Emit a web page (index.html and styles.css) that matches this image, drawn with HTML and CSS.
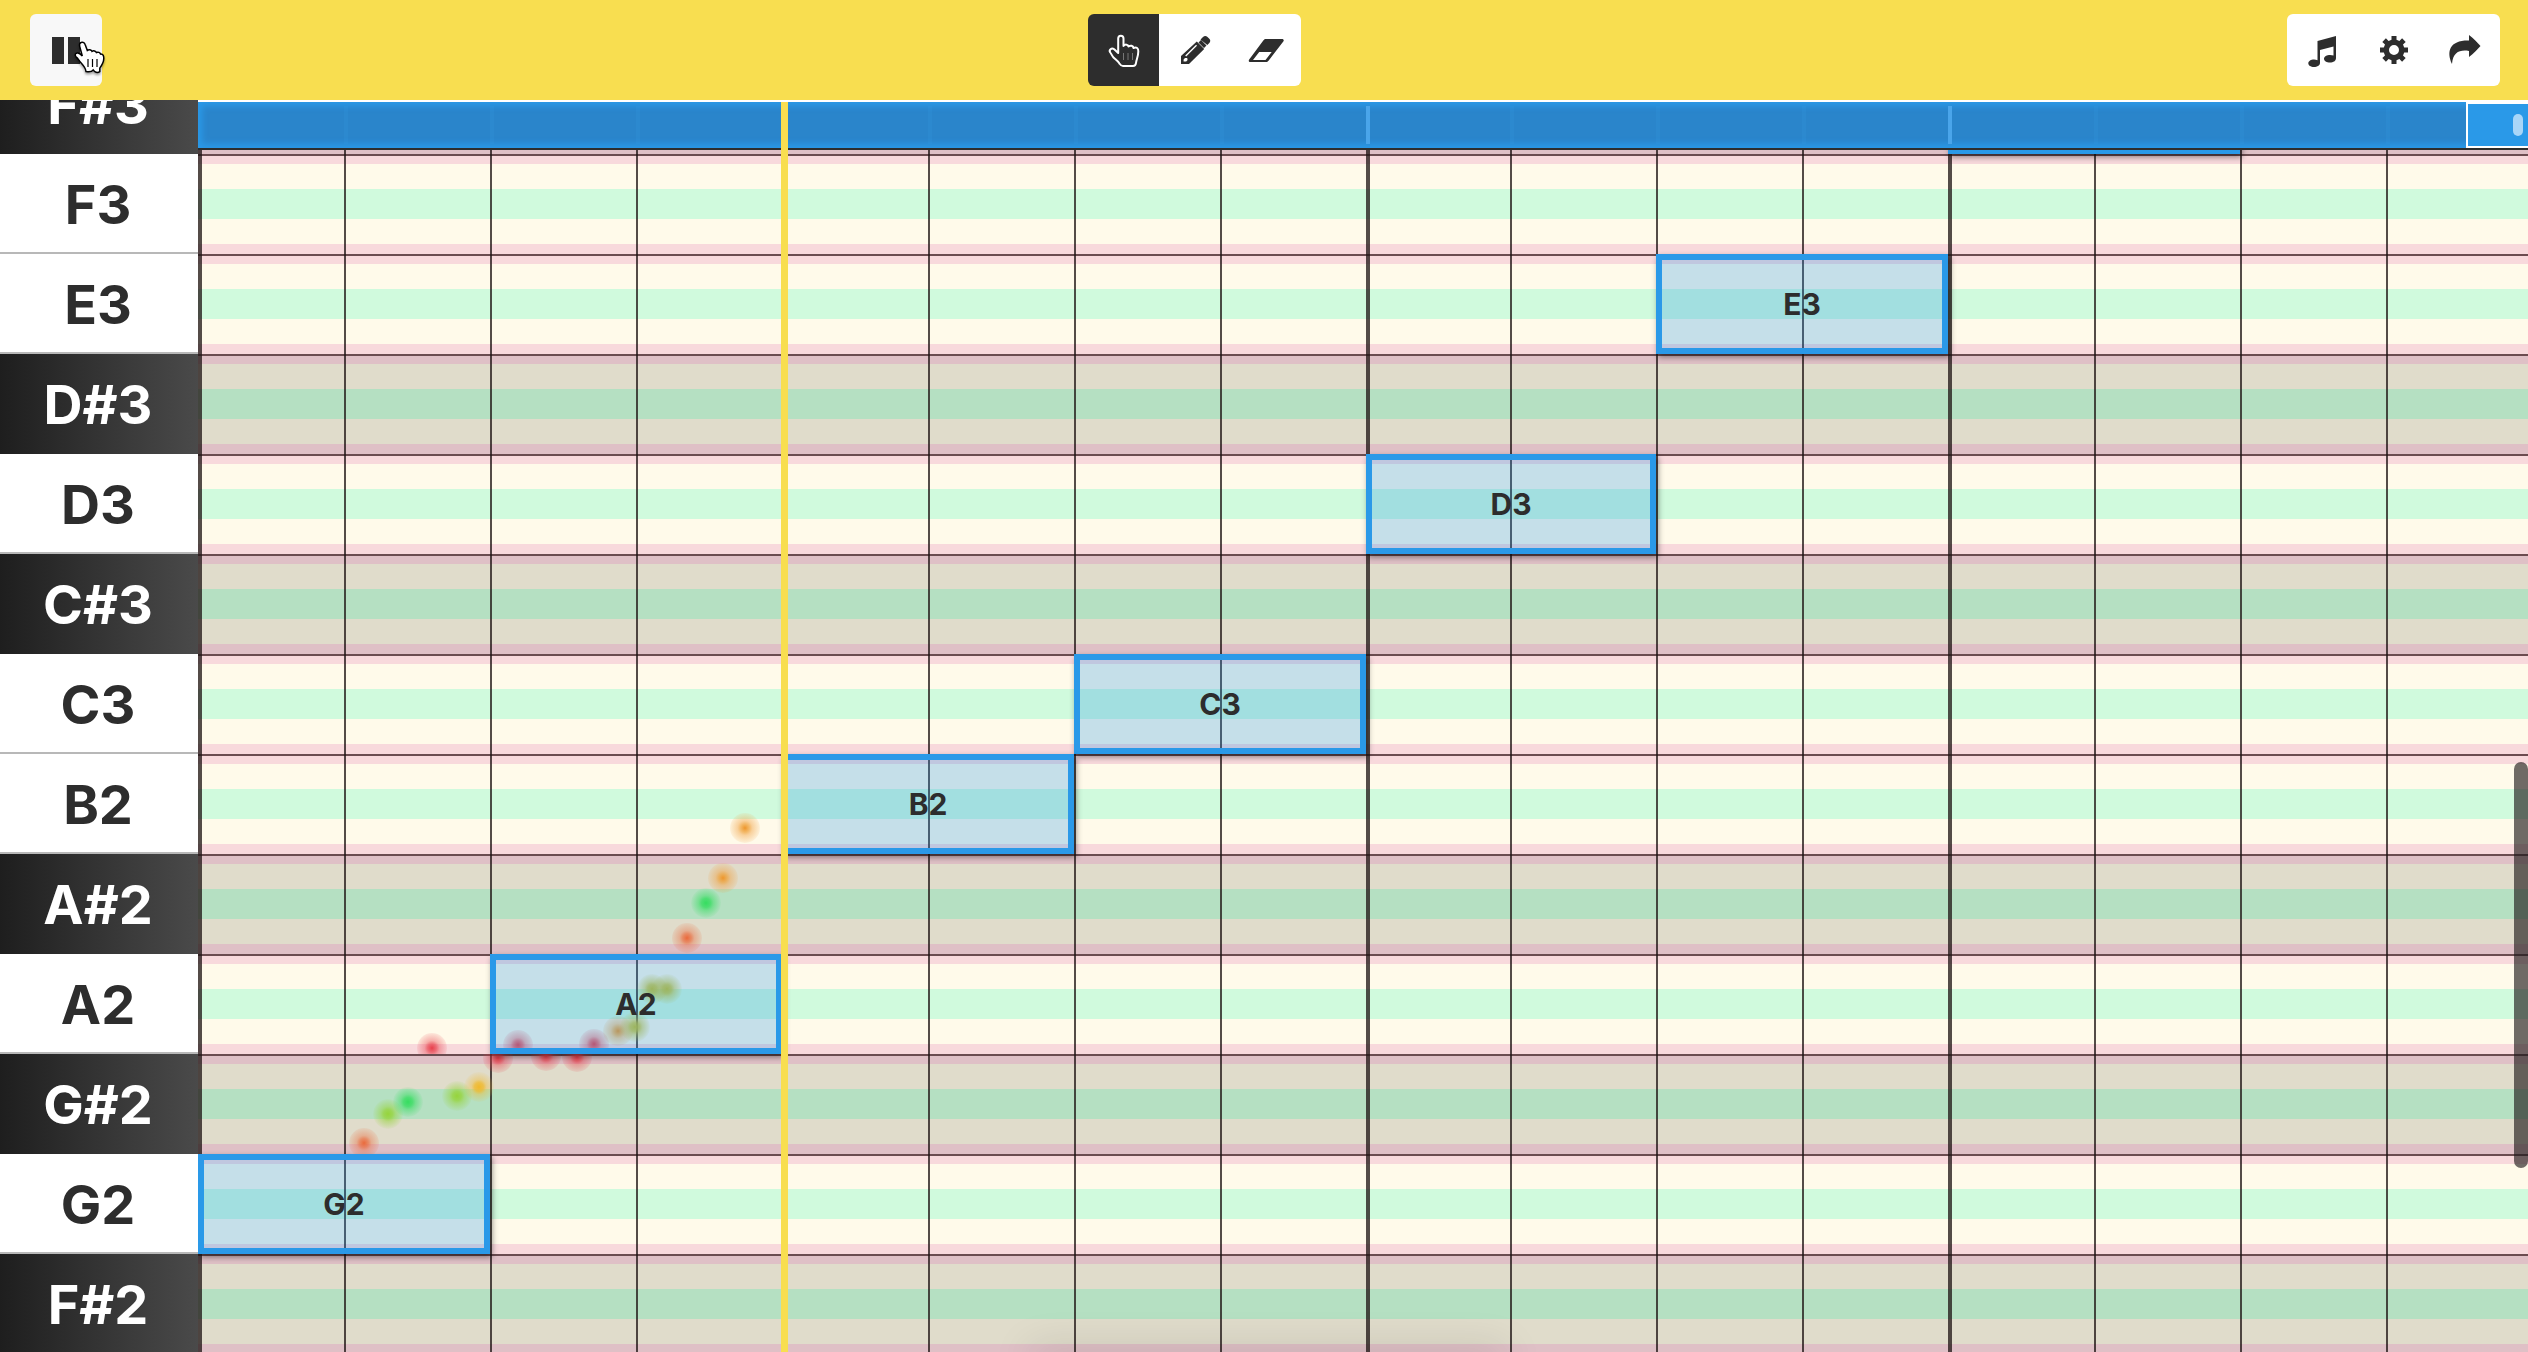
FILE: index.html
```html
<!DOCTYPE html>
<html lang="en">
<head>
<meta charset="utf-8">
<title>Piano roll</title>
<link rel="stylesheet" href="styles.css">
</head>
<body>
<header class="toolbar">
  <div class="group">
    <button class="tool tool-hover" type="button" aria-label="Pause">
      <svg class="icon" viewBox="0 0 32 32"><path d="M2 3h12v27H2zM18 3h12v27H18z"/></svg>
    </button>
    <svg class="pointer" viewBox="0 0 32 36" aria-hidden="true"><path d="M7 2.500c2.200-1 3.700.5 4.300 2.500l2 5.500c1.500-1.400 4-1 4.700.8 1.600-1 3.700-.4 4.400 1.200 1.800-.8 3.500 0 4.200 1.600 2.800-.2 3.200 2 3.200 4.500-.1 4-2 6.800-4 9.500v3.600c-1.600 1-3.200 1-5 0l-1.600-1.700c-1.600 2-4.600 2-7.200 1.500-.4-4-3-6.300-5.500-9.200-1.700-2-2.500-4-4.500-5.400C.500 15 1.200 12.500 4 13c2 .4 3.500 2 4.300 3L5.700 6.500C5.200 4.600 5.300 3.200 7 2.500z"/><path class="pointer-lines" d="M14 19v8M18.500 19v8M23 19v8"/></svg>
  </div>
  <div class="group">
    <button class="tool tool-active" type="button" aria-label="Select">
      <svg class="icon icon-line" viewBox="0 0 32 32"><path d="M10.200 19V4.500C10.200.700 15.500.700 15.500 4.500V12C17 10 20 10.200 20.500 12.500 22.500 11 25 11.500 25.500 14 28.500 12.800 30.500 14.200 30.300 17.500 30.200 23 28.500 25 28 29c-.3 2.500-1 3-3 3H15c-2 0-2.500-1-3.700-2.700C9.500 26.500 7.500 25.500 5.500 23.500 4 22 3.500 20 2.300 18.500.500 16 3.500 13.200 6.200 15.300z"/><path class="soft" d="M15.500 19v7M20 19v7M24.500 19v7"/></svg>
    </button>
    <button class="tool" type="button" aria-label="Draw">
      <svg class="icon" viewBox="0 0 32 32"><path d="M19.500 8.500 22 6l5.500 5.500L25 14zM21.500 5.500 24 3c1.500-1.500 3-1.500 4.500 0l1.800 1.800c1.300 1.400 1.300 2.800 0 4.200l-2 2zM17.800 7.500l7.400 7.400L10 30H2v-8zm-.7 3.300L6.200 21.600l1 1L18 11.800zM6 24l-1.400 1.400v2.200h2.600L8.600 26l-.4-2z"/></svg>
    </button>
    <button class="tool" type="button" aria-label="Erase">
      <svg class="icon icon-wide" viewBox="0 0 36 32"><path fill-rule="evenodd" d="M18 5h16c1.500 0 2.300 1.300 1.300 2.600L20.500 26.700c-.7.900-1.300 1.300-2.500 1.300H2.300C.8 28 .3 26.700 1.200 25.500L15.500 6.300C16.200 5.400 16.800 5 18 5zM11.200 18 5 26h12.500l6.200-8z"/></svg>
    </button>
  </div>
  <div class="group">
    <button class="tool" type="button" aria-label="Instrument">
      <svg class="icon" viewBox="0 0 32 32"><path d="M29 2v22c0 3-2.700 4.500-6 4.500s-6-1.500-6-3.800S20 21 23 21c1.300 0 2.500.2 3.500.6V12.500L13 16v13c0 2.400-2.800 4-6 4s-5.700-1.500-5.700-3.700S4 25.500 7 25.500c1.200 0 2.500.3 3.500.7V7z"/></svg>
    </button>
    <button class="tool" type="button" aria-label="Settings">
      <svg class="icon" viewBox="0 0 32 32"><path fill-rule="evenodd" d="M13.500 2h5v3.800l2.900 1.200 2.700-2.700 3.600 3.600L25 10.600l1.200 2.900H30v5h-3.800L25 21.400l2.700 2.700-3.600 3.600-2.700-2.700-2.900 1.200V30h-5v-3.800L10.600 25l-2.700 2.700-3.600-3.600L7 21.400l-1.200-2.900H2v-5h3.800L7 10.600 4.300 7.900l3.600-3.600L10.600 7l2.900-1.200zM16 11a5 5 0 1 0 0 10 5 5 0 0 0 0-10z"/></svg>
    </button>
    <button class="tool" type="button" aria-label="Share">
      <svg class="icon icon-wide" viewBox="0 0 36 32"><path d="M22 1c5 4 8 7 11.500 11-3.500 4-6.500 7-11.500 11v-6C13 15.500 6 18 5 30-1 17 3 6 22 6.500z"/></svg>
    </button>
  </div>
</header>

<main class="roll">
  <div class="keys">
    <div class="key sharp">F#3</div>
    <div class="key">F3</div>
    <div class="key">E3</div>
    <div class="key sharp">D#3</div>
    <div class="key">D3</div>
    <div class="key sharp">C#3</div>
    <div class="key">C3</div>
    <div class="key">B2</div>
    <div class="key sharp">A#2</div>
    <div class="key">A2</div>
    <div class="key sharp">G#2</div>
    <div class="key">G2</div>
    <div class="key sharp">F#2</div>
  </div>
  <div class="stage">
    <div class="lanes">
      <div class="lane dark"></div><div class="lane"></div><div class="lane"></div><div class="lane dark"></div><div class="lane"></div><div class="lane dark"></div><div class="lane"></div><div class="lane"></div><div class="lane dark"></div><div class="lane"></div><div class="lane dark"></div><div class="lane"></div><div class="lane dark"></div>
    </div>
    <div class="beats">
      <i class="bar"></i><i></i><i></i><i></i><i class="bar"></i><i></i><i></i><i></i><i class="bar"></i><i></i><i></i><i></i><i class="bar"></i><i></i><i></i><i></i>
    </div>
    <svg class="pitch" aria-hidden="true">
      <defs>
        <radialGradient id="red"><stop offset="0" stop-color="#e8404c"/><stop offset=".3" stop-color="#e8404c" stop-opacity=".7"/><stop offset=".5" stop-color="#e8404c" stop-opacity=".4"/><stop offset="1" stop-color="#e8404c" stop-opacity=".1"/></radialGradient>
        <radialGradient id="coral"><stop offset="0" stop-color="#ea6a3c"/><stop offset=".3" stop-color="#ea6a3c" stop-opacity=".7"/><stop offset=".5" stop-color="#ea6a3c" stop-opacity=".4"/><stop offset="1" stop-color="#ea6a3c" stop-opacity=".1"/></radialGradient>
        <radialGradient id="orange"><stop offset="0" stop-color="#ee962c"/><stop offset=".3" stop-color="#ee9f35" stop-opacity=".7"/><stop offset=".5" stop-color="#f0a040" stop-opacity=".45"/><stop offset="1" stop-color="#f0a040" stop-opacity=".1"/></radialGradient>
        <radialGradient id="gold"><stop offset="0" stop-color="#f0b92c"/><stop offset=".3" stop-color="#f0b92c" stop-opacity=".8"/><stop offset=".5" stop-color="#f0b92c" stop-opacity=".4"/><stop offset="1" stop-color="#f0b92c" stop-opacity=".05"/></radialGradient>
        <radialGradient id="olive"><stop offset="0" stop-color="#c8c02c"/><stop offset=".3" stop-color="#c8c02c" stop-opacity=".8"/><stop offset=".5" stop-color="#c8c02c" stop-opacity=".5"/><stop offset="1" stop-color="#c8c02c" stop-opacity=".05"/></radialGradient>
        <radialGradient id="lime"><stop offset="0" stop-color="#96d43c"/><stop offset=".3" stop-color="#96d43c" stop-opacity=".8"/><stop offset=".5" stop-color="#96d43c" stop-opacity=".5"/><stop offset="1" stop-color="#96d43c" stop-opacity=".05"/></radialGradient>
        <radialGradient id="green"><stop offset="0" stop-color="#36dd60"/><stop offset=".3" stop-color="#36dd60" stop-opacity=".8"/><stop offset=".5" stop-color="#36dd60" stop-opacity=".5"/><stop offset="1" stop-color="#36dd60" stop-opacity=".05"/></radialGradient>
        <clipPath id="lane-a2"><rect x="0" y="900" width="2400" height="100"/></clipPath>
        <clipPath id="lane-gs2"><rect x="0" y="1000" width="2400" height="100"/></clipPath>
      </defs>
      <g>
        <circle cx="489" cy="884" r="15" fill="url(#coral)"/>
        <circle cx="508" cy="849" r="15" fill="url(#green)"/>
        <circle cx="525" cy="824" r="15" fill="url(#orange)"/>
        <circle cx="547" cy="774" r="15" fill="url(#orange)"/>
      </g>
      <g clip-path="url(#lane-a2)">
        <circle cx="234" cy="994" r="15" fill="url(#red)"/>
        <circle cx="320" cy="991" r="15" fill="url(#red)"/>
        <circle cx="396" cy="990" r="15" fill="url(#red)"/>
        <circle cx="420" cy="977" r="15" fill="url(#orange)"/>
        <circle cx="437" cy="973" r="15" fill="url(#olive)"/>
        <circle cx="454" cy="935" r="15" fill="url(#olive)"/>
        <circle cx="469" cy="935" r="15" fill="url(#olive)"/>
      </g>
      <g clip-path="url(#lane-gs2)">
        <circle cx="166" cy="1089" r="15" fill="url(#coral)"/>
        <circle cx="190" cy="1060" r="15" fill="url(#lime)"/>
        <circle cx="210" cy="1048" r="15" fill="url(#green)"/>
        <circle cx="259" cy="1042" r="15" fill="url(#lime)"/>
        <circle cx="281" cy="1033" r="15" fill="url(#gold)"/>
        <circle cx="300" cy="1004" r="15" fill="url(#red)"/>
        <circle cx="348" cy="1002" r="15" fill="url(#red)"/>
        <circle cx="379" cy="1003" r="15" fill="url(#red)"/>
      </g>
    </svg>
    <div class="notes">
      <div class="note row-1 col-13"></div>
      <div class="note row-3 col-11">E3</div>
      <div class="note row-5 col-9">D3</div>
      <div class="note row-7 col-7">C3</div>
      <div class="note row-8 col-5">B2</div>
      <div class="note row-10 col-3">A2</div>
      <div class="note row-12 col-1">G2</div>
    </div>
    <div class="timeline">
      <div class="ticks">
        <i></i><i></i><i></i><i></i><i class="bar"></i><i></i><i></i><i></i><i class="bar"></i><i></i><i></i><i></i><i class="bar"></i><i></i><i></i><i></i>
      </div>
      <button class="loop-end" type="button" aria-label="Loop end"><span class="grip"></span></button>
    </div>
    <div class="playhead"></div>
    <div class="drawer-shade"></div>
    <div class="scrollbar"></div>
  </div>
</main>
</body>
</html>
```

FILE: styles.css
```css
* { box-sizing: border-box; }

:root {
  --ink: #2d2d2d;
  --blue: #2a99e8;
  --yellow: #f8de50;
  --row: 100px;
  --beats: repeat(8, 146px) 144px repeat(6, 146px) 1fr;
}

body {
  margin: 0;
  height: 100vh;
  display: flex;
  flex-direction: column;
  overflow: hidden;
  font-family: Inter, "Liberation Sans", sans-serif;
  color: var(--ink);
}

.toolbar {
  flex: none;
  height: 100px;
  padding: 0 28px 0 30px;
  display: flex;
  align-items: center;
  justify-content: space-between;
  background: var(--yellow);
  position: relative;
  z-index: 2;
}

.group { display: flex; position: relative; }

.tool {
  width: 71px;
  height: 72px;
  padding: 0;
  border: 0;
  background: #fff;
  color: var(--ink);
  display: grid;
  place-items: center;
}
.tool:first-child { border-radius: 6px 0 0 6px; }
.tool:last-child { border-radius: 0 6px 6px 0; }
.tool.tool-hover { width: 72px; background: #f8f8f8; border-radius: 6px; }
.tool.tool-active { background: var(--ink); color: #fff; }

.icon { width: 32px; height: 32px; fill: currentColor; overflow: visible; }
.icon-wide { width: 36px; }
.icon-line { fill: none; stroke: currentColor; stroke-width: 2; stroke-linejoin: round; }
.soft { stroke: #777; stroke-width: 1; }

.pointer {
  position: absolute;
  left: 44px;
  top: 26px;
  width: 32px;
  height: 36px;
  fill: #fff;
  stroke: #000;
  stroke-width: 1.5;
  overflow: visible;
  filter: drop-shadow(0 2px 1px rgba(0, 0, 0, .35));
}
.pointer-lines { stroke-width: 1.2; }

.roll {
  flex: 1;
  min-height: 0;
  display: grid;
  grid-template-columns: 198px 1fr;
  overflow: hidden;
}

.key {
  height: var(--row);
  padding-right: 2px;
  display: flex;
  align-items: center;
  justify-content: center;
  background: #fff;
  box-shadow: inset 0 -2px #b8b8b8;
  font-size: 54px;
  font-weight: 700;
}
.key.sharp {
  box-shadow: none;
  background: linear-gradient(90deg, #1e1e1e, #4a4a4a);
  color: #fff;
}

.stage { position: relative; min-width: 0; overflow: hidden; }

.lane {
  height: var(--row);
  border-top: 2px solid #6b4c50;
  background: linear-gradient(#f8d9dc 8px, #fffaea 8px 33px, #d0fadd 33px 63px, #fffaea 63px 88px, #f8d9dc 88px);
}
.lane.dark {
  background: linear-gradient(#dfc0c6 8px, #e0dccb 8px 33px, #b5e0c2 33px 63px, #e0dccb 63px 88px, #dfc0c6 88px);
}

.beats, .pitch, .notes { position: absolute; inset: 0; }
.beats, .notes, .ticks { display: grid; grid-template-columns: var(--beats); }
.beats i { border-left: 2px solid rgba(30, 20, 20, .76); }
.beats i.bar { border-left-width: 4px; }

.pitch { width: 100%; height: 100%; }

.notes { grid-template-rows: repeat(13, var(--row)); }

/* The roll is scrolled part of the way into its first row. */
.keys, .lanes, .notes, .pitch { margin-top: -46px; }

.note {
  border: 6px solid var(--blue);
  background: rgba(42, 153, 232, .27);
  box-shadow: 2px 3px 6px rgba(0, 0, 0, .45);
  display: flex;
  align-items: center;
  justify-content: center;
  font-size: 30px;
  font-weight: 700;
}
.row-1 { grid-row: 1; }
.row-3 { grid-row: 3; }
.row-5 { grid-row: 5; }
.row-7 { grid-row: 7; }
.row-8 { grid-row: 8; }
.row-10 { grid-row: 10; }
.row-12 { grid-row: 12; }
.col-1 { grid-column: 1 / span 2; }
.col-3 { grid-column: 3 / span 2; }
.col-5 { grid-column: 5 / span 2; }
.col-7 { grid-column: 7 / span 2; }
.col-9 { grid-column: 9 / span 2; }
.col-11 { grid-column: 11 / span 2; }
.col-13 { grid-column: 13 / span 2; }

.timeline {
  position: absolute;
  top: 0;
  left: 0;
  right: 0;
  height: 50px;
  border-top: 2px solid #fff;
  border-bottom: 2px solid var(--ink);
  background: #2a85cb;
  box-shadow: inset 0 0 6px 4px var(--blue);
}
.ticks { height: 100%; padding: 4px 0; }
.ticks i { border-left: 4px solid rgba(60, 160, 235, .15); }
.ticks i:first-child { border-left: 0; }
.ticks i.bar { border-left-color: #4aa5ea; }

.loop-end {
  position: absolute;
  top: 0;
  right: 0;
  width: 62px;
  height: 46px;
  padding: 0 5px 0 0;
  border: 2px solid #fff;
  border-right: 0;
  background: var(--blue);
  display: flex;
  align-items: center;
  justify-content: flex-end;
}
.grip { width: 10px; height: 22px; border-radius: 5px; background: #a9d6f8; }

.playhead {
  position: absolute;
  top: 2px;
  bottom: 0;
  left: 583px;
  width: 7px;
  background: var(--yellow);
}

.drawer-shade {
  position: absolute;
  left: 840px;
  bottom: -8px;
  width: 460px;
  height: 4px;
  box-shadow: 0 0 40px 8px rgba(0, 0, 0, .16);
}

.scrollbar {
  position: absolute;
  top: 662px;
  right: 0;
  width: 14px;
  height: 406px;
  border-radius: 7px;
  background: rgba(30, 25, 25, .64);
}
```
